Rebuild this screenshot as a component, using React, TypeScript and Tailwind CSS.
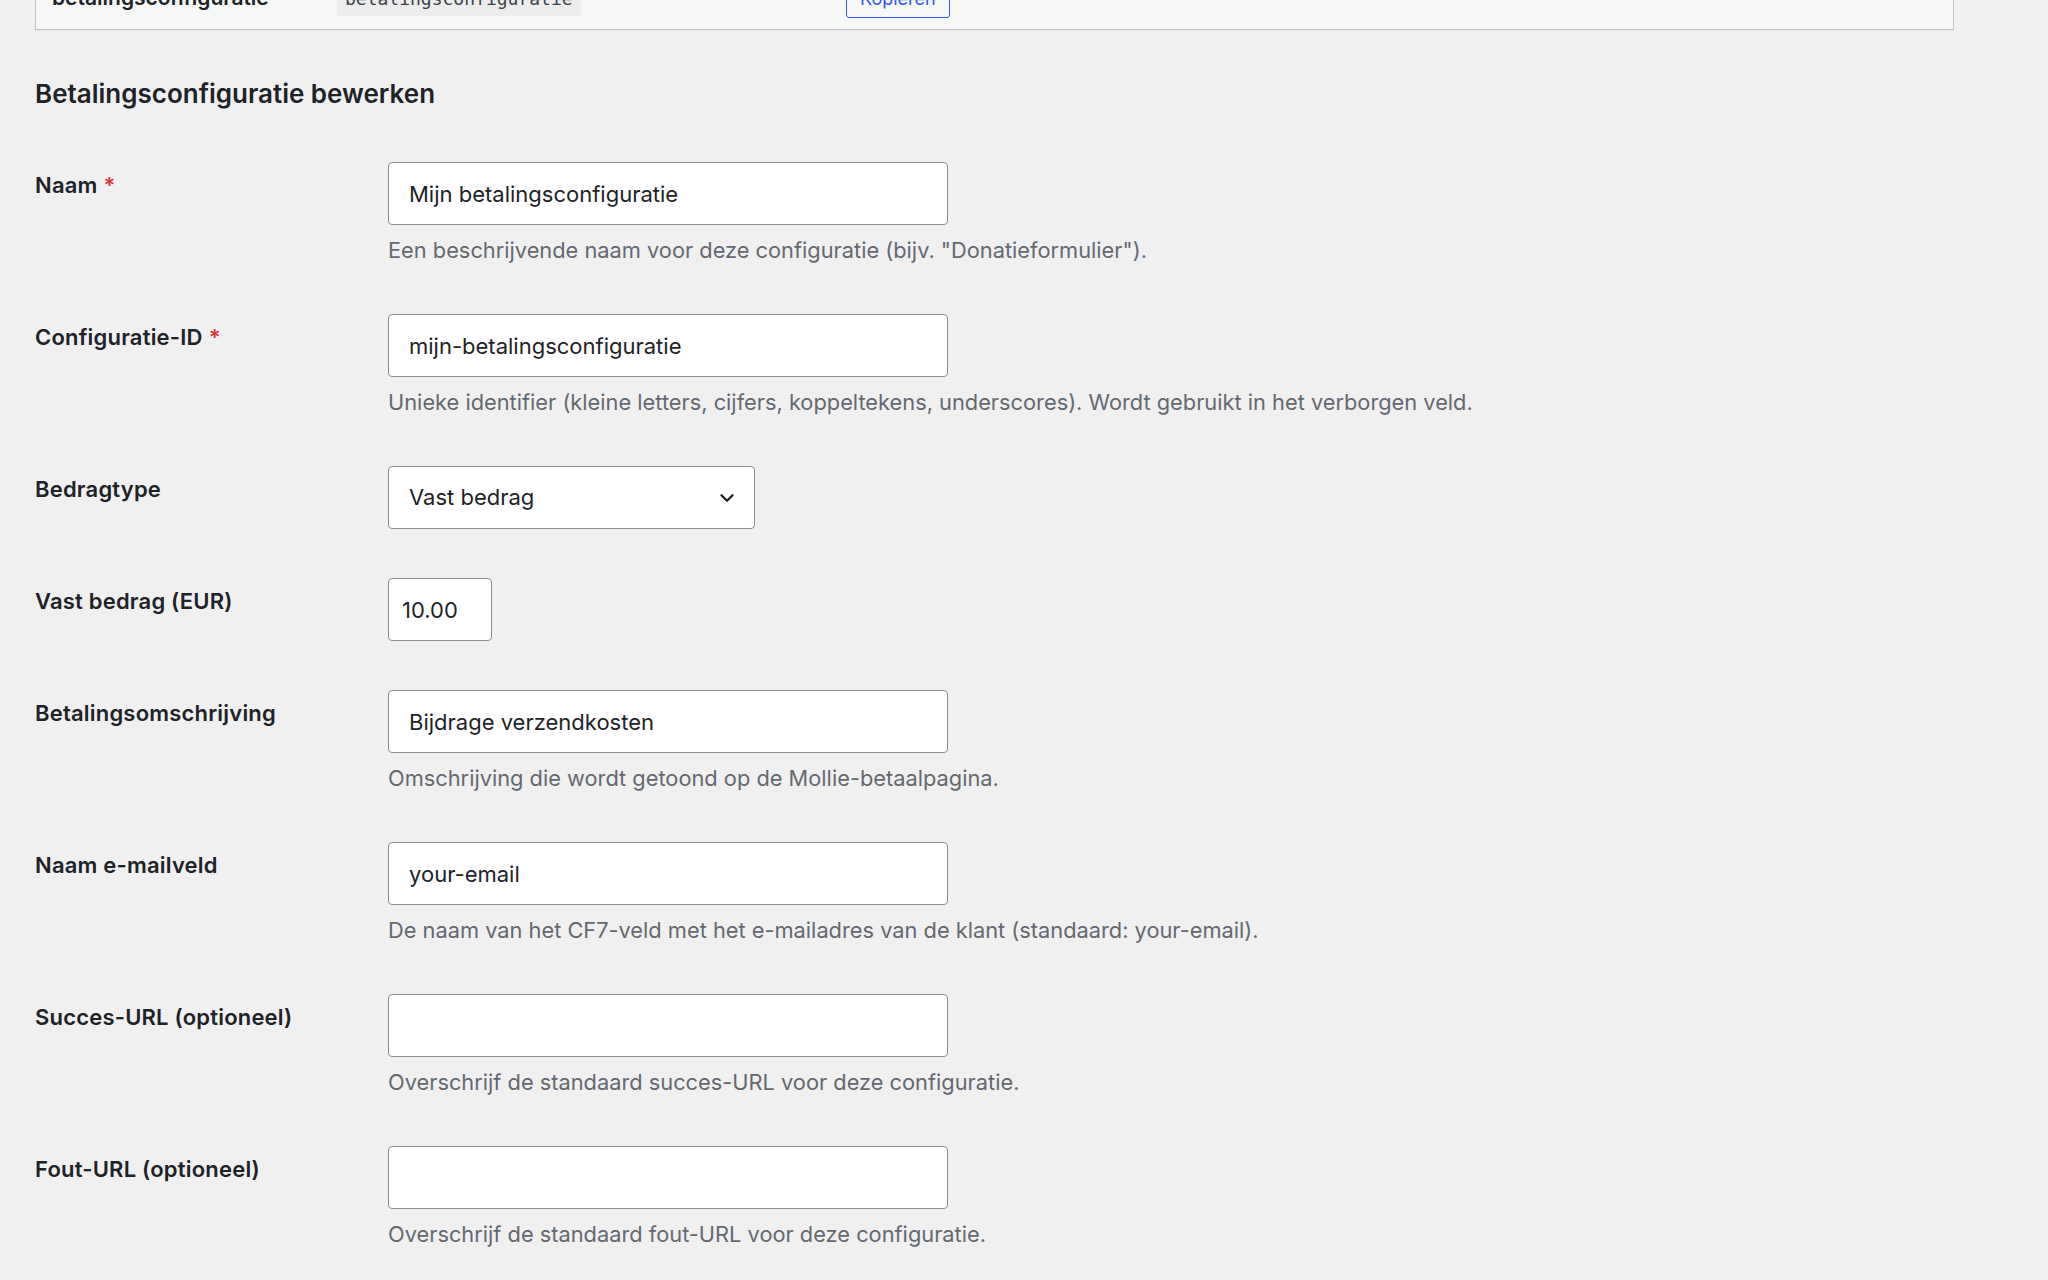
import { ChevronDown } from 'lucide-react';

type Field = {
  label: string;
  required?: boolean;
  kind: 'text' | 'select' | 'number';
  value: string;
  help?: string;
};

const fields: Field[] = [
  {
    label: 'Naam',
    required: true,
    kind: 'text',
    value: 'Mijn betalingsconfiguratie',
    help: 'Een beschrijvende naam voor deze configuratie (bijv. "Donatieformulier").',
  },
  {
    label: 'Configuratie-ID',
    required: true,
    kind: 'text',
    value: 'mijn-betalingsconfiguratie',
    help: 'Unieke identifier (kleine letters, cijfers, koppeltekens, underscores). Wordt gebruikt in het verborgen veld.',
  },
  { label: 'Bedragtype', kind: 'select', value: 'Vast bedrag' },
  { label: 'Vast bedrag (EUR)', kind: 'number', value: '10.00' },
  {
    label: 'Betalingsomschrijving',
    kind: 'text',
    value: 'Bijdrage verzendkosten',
    help: 'Omschrijving die wordt getoond op de Mollie-betaalpagina.',
  },
  {
    label: 'Naam e-mailveld',
    kind: 'text',
    value: 'your-email',
    help: 'De naam van het CF7-veld met het e-mailadres van de klant (standaard: your-email).',
  },
  {
    label: 'Succes-URL (optioneel)',
    kind: 'text',
    value: '',
    help: 'Overschrijf de standaard succes-URL voor deze configuratie.',
  },
  {
    label: 'Fout-URL (optioneel)',
    kind: 'text',
    value: '',
    help: 'Overschrijf de standaard fout-URL voor deze configuratie.',
  },
];

function FieldControl({ field }: { field: Field }) {
  if (field.kind === 'select') {
    return (
      <div className="w-[367px] h-[63px] bg-white border border-[#8c8f94] rounded-[4px] flex items-center justify-between pl-[20px] pr-[16px] text-[22px] text-[#1d2327]">
        <span>{field.value}</span>
        <ChevronDown size={22} strokeWidth={2.6} className="text-[#1d2327]" />
      </div>
    );
  }
  if (field.kind === 'number') {
    return (
      <input
        readOnly
        value={field.value}
        className="w-[104px] h-[63px] bg-white border border-[#8c8f94] rounded-[4px] px-[13px] text-[22px] text-[#1d2327] outline-none"
      />
    );
  }
  return (
    <input
      readOnly
      value={field.value}
      className="w-[560px] h-[63px] bg-white border border-[#8c8f94] rounded-[4px] px-[20px] text-[22px] text-[#1d2327] outline-none"
    />
  );
}

export default function App() {
  return (
    <div className="min-h-screen bg-[#f0f0f1] font-['Inter',sans-serif] overflow-hidden">
      <div className="pl-[35px] pr-[94px]">
        {/* Shortcode panel (scrolled partly out of view) */}
        <div className="mt-[-37px] bg-[#f6f7f7] border border-[#c3c4c7] shadow-[0_1px_1px_rgba(0,0,0,0.04)] pl-[16px] pt-[14px] pb-[11px]">
          <div className="flex items-center h-[40px]">
            <div className="w-[285px] text-[21px] font-semibold text-[#1d2327]">betalingsconfiguratie</div>
            <div className="w-[509px]">
              <code className="inline-block bg-[#ececec] px-[8px] py-[4px] font-['DejaVu_Sans_Mono',monospace] text-[18px] text-[#3c434a]">
                betalingsconfiguratie
              </code>
            </div>
            <button className="h-[40px] px-[13px] border border-[#3858e9] rounded-[3px] bg-[#f6f7f7] text-[18px] text-[#3858e9]">
              Kopiëren
            </button>
          </div>
        </div>

        <h2 className="mt-[47px] text-[26px] leading-[34px] font-semibold text-[#1d2327]">
          Betalingsconfiguratie bewerken
        </h2>

        <div className="mt-[27px]">
          {fields.map((field) => (
            <div key={field.label} className="grid grid-cols-[353px_1fr] pt-[24px] pb-[25px]">
              <div className="pt-[9px] text-[22px] tracking-[0.2px] leading-[29px] font-semibold text-[#1d2327]">
                {field.label}
                {field.required && <span className="text-[#d63638] ml-[6px]">*</span>}
              </div>
              <div className="flex flex-col">
                <FieldControl field={field} />
                {field.help && (
                  <p className="mt-[11px] text-[21.8px] leading-[29px] text-[#646970]">{field.help}</p>
                )}
              </div>
            </div>
          ))}
        </div>
      </div>
    </div>
  );
}
